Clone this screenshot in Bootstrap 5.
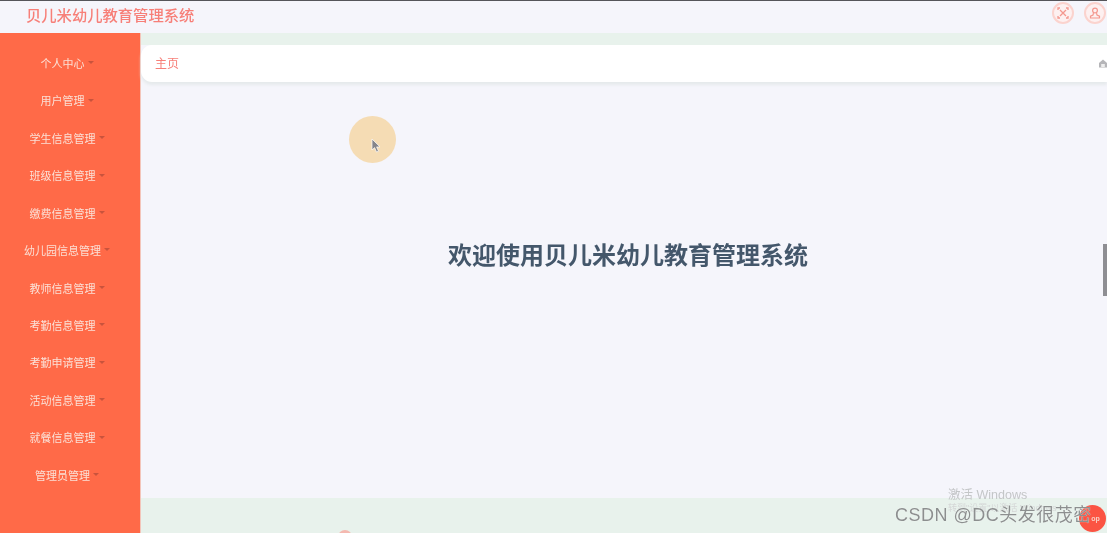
<!DOCTYPE html>
<html lang="zh-CN">
<head>
<meta charset="utf-8">
<title>贝儿米幼儿教育管理系统</title>
<link href="https://cdn.jsdelivr.net/npm/bootstrap@5.3.0/dist/css/bootstrap.min.css" rel="stylesheet">
<style>
html,body{height:533px;overflow:hidden;}
body{font-family:"Liberation Sans","Noto Sans CJK SC",sans-serif;background:#f5f5fb;}
.app-shell{width:1107px;height:533px;position:relative;overflow:hidden;filter:blur(.5px);}
.top-line{height:1px;background:#55555a;}
.top-head{height:32px;background:#f5f5fb;padding-left:26px;padding-right:1px;padding-bottom:4px;}
.brand-name{font-size:15.3px;line-height:24px;color:#f77f78;font-weight:500;margin-top:2px;}
.head-ico{width:22px;height:22px;border-radius:50%;border:2px solid #fbd3ce;background:#fdf0f0;}
.head-gap{gap:10px;margin-bottom:4px;}
.body-row{height:500px;}
.side-menu{width:141px;background:#ff6a48;border-right:1px solid #f3c5ba;padding-top:12.5px;}
.side-link{height:37.45px;font-size:11px;color:#fbe0d6;text-decoration:none;padding-right:6px;}
.side-link:hover{color:#fbe0d6;}
.side-caret{width:0;height:0;border:3px solid transparent;border-top:3.5px solid #c9533c;border-bottom:0;margin-left:3px;margin-top:-3px;}
.main-area{background:#f5f5fb;min-width:0;}
.green-strip{height:12px;background:#e8f2ec;}
.crumb-bar{height:37px;background:#fff;border-radius:11px 0 0 11px;padding:0 0 0 14px;box-shadow:0 3px 3px #e6eaec;}
.crumb-text{font-size:12px;color:#f77f78;}
.welcome-wrap{height:416px;padding-top:158px;padding-left:8px;}
.welcome-text{font-size:24px;font-weight:700;color:#44576b;line-height:32px;margin:0;}
.foot-band{height:35px;background:#e8f2ec;position:relative;overflow:hidden;}
.foot-dot{position:absolute;left:197px;top:32px;width:14px;height:14px;border-radius:50%;background:#f4b9b0;}
.click-dot{position:absolute;left:348.5px;top:115.5px;width:47px;height:47px;border-radius:50%;background:#f5dcb4;}
.pointer{position:absolute;left:371px;top:138px;}
.scroll-thumb{position:absolute;left:1103px;top:244px;width:4px;height:52px;background:#8e8e93;}
.win-mark{position:absolute;left:948px;top:488px;font-size:12.5px;line-height:15px;color:#c4c6c8;}
.win-sub{position:absolute;left:948px;top:503px;font-size:9px;line-height:11px;color:#d5d7d7;}
.top-btn{position:absolute;left:1079px;top:505px;width:27px;height:27px;border-radius:50%;background:#fb5443;color:#f8cfc4;font-size:7px;line-height:27px;text-align:center;padding-left:6px;font-weight:700;}
.csdn-mark{position:absolute;left:895px;top:504px;font-size:18px;line-height:22px;color:#8c8f8f;letter-spacing:.5px;text-shadow:0 0 1px #fff;white-space:nowrap;}
.home-ico{position:absolute;left:1099px;top:59px;}
</style>
</head>
<body>
<div class="app-shell">
  <div class="top-line"></div>
  <header class="top-head d-flex align-items-center justify-content-between">
    <div class="brand-name">贝儿米幼儿教育管理系统</div>
    <div class="d-flex head-gap">
      <div class="head-ico d-flex align-items-center justify-content-center">
        <svg width="12" height="12" viewBox="0 0 12 12" fill="none" stroke="#f4978e" stroke-width="1.3"><path d="M3 3 9 9M9 3 3 9"/><path d="M1 3V1h2M9 1h2v2M11 9v2H9M3 11H1V9"/></svg>
      </div>
      <div class="head-ico d-flex align-items-center justify-content-center">
        <svg width="12" height="12" viewBox="0 0 12 12" fill="none" stroke="#f4978e" stroke-width="1.2"><circle cx="6" cy="3.6" r="2.4"/><path d="M4.5 6.2 4 8 1.5 9.2V11h9V9.2L8 8l-.5-1.8"/></svg>
      </div>
    </div>
  </header>
  <div class="body-row d-flex">
    <nav class="side-menu flex-shrink-0 d-flex flex-column">
      <a class="side-link d-flex align-items-center justify-content-center" href="#">个人中心<span class="side-caret"></span></a>
      <a class="side-link d-flex align-items-center justify-content-center" href="#">用户管理<span class="side-caret"></span></a>
      <a class="side-link d-flex align-items-center justify-content-center" href="#">学生信息管理<span class="side-caret"></span></a>
      <a class="side-link d-flex align-items-center justify-content-center" href="#">班级信息管理<span class="side-caret"></span></a>
      <a class="side-link d-flex align-items-center justify-content-center" href="#">缴费信息管理<span class="side-caret"></span></a>
      <a class="side-link d-flex align-items-center justify-content-center" href="#">幼儿园信息管理<span class="side-caret"></span></a>
      <a class="side-link d-flex align-items-center justify-content-center" href="#">教师信息管理<span class="side-caret"></span></a>
      <a class="side-link d-flex align-items-center justify-content-center" href="#">考勤信息管理<span class="side-caret"></span></a>
      <a class="side-link d-flex align-items-center justify-content-center" href="#">考勤申请管理<span class="side-caret"></span></a>
      <a class="side-link d-flex align-items-center justify-content-center" href="#">活动信息管理<span class="side-caret"></span></a>
      <a class="side-link d-flex align-items-center justify-content-center" href="#">就餐信息管理<span class="side-caret"></span></a>
      <a class="side-link d-flex align-items-center justify-content-center" href="#">管理员管理<span class="side-caret"></span></a>
    </nav>
    <main class="main-area flex-grow-1 d-flex flex-column">
      <div class="green-strip"></div>
      <div class="crumb-bar d-flex align-items-center"><span class="crumb-text">主页</span></div>
      <div class="welcome-wrap text-center"><h1 class="welcome-text">欢迎使用贝儿米幼儿教育管理系统</h1></div>
      <div class="foot-band"><span class="foot-dot"></span></div>
    </main>
  </div>
  <svg class="home-ico" width="8" height="9" viewBox="0 0 8 9" fill="#b5b5b8"><path d="M4 .5 8 4v4.5H0V4z"/><rect x="2.2" y="5" width="3.6" height="3" fill="#eee"/></svg>
  <div class="click-dot"></div>
  <svg class="pointer" width="10" height="15" viewBox="0 0 10 15"><path d="M1 1V12l2.6-2.4 1.9 4.4 2-.8-1.9-4.3h3.4z" fill="#85858a" stroke="#fff" stroke-width=".7"/></svg>
  <div class="scroll-thumb"></div>
  <div class="win-mark">激活 Windows</div>
  <div class="win-sub">转到"设置"以激活 Windows</div>
  <div class="top-btn">op</div>
  <div class="csdn-mark">CSDN @DC头发很茂密</div>
</div>
<script src="https://cdn.jsdelivr.net/npm/bootstrap@5.3.0/dist/js/bootstrap.bundle.min.js"></script>
</body>
</html>
